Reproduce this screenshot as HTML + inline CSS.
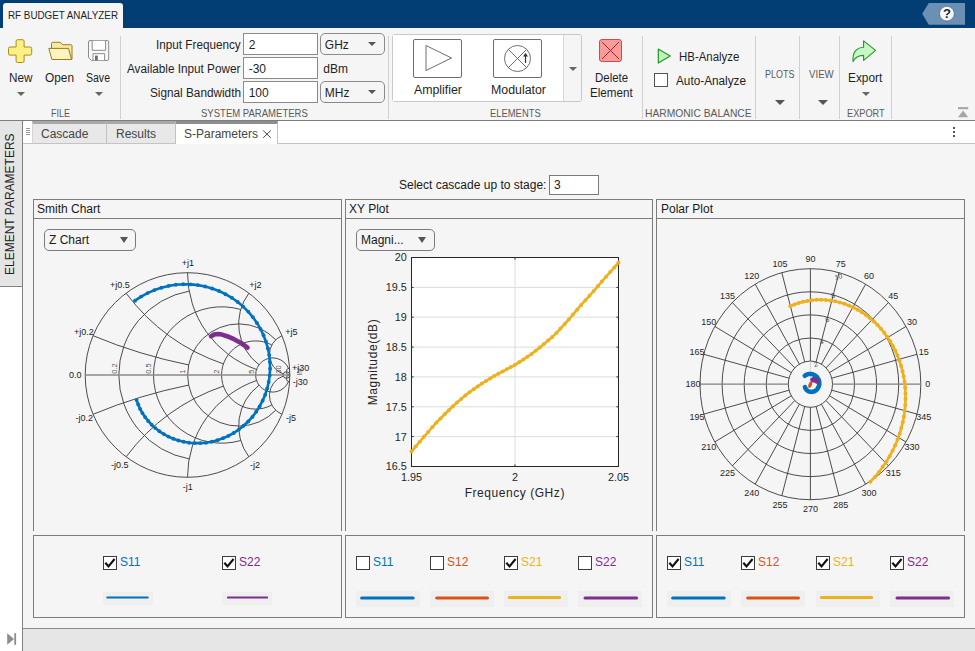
<!DOCTYPE html>
<html><head><meta charset="utf-8"><title>RF Budget Analyzer</title>
<style>
html,body{margin:0;padding:0;}
body{width:975px;height:651px;overflow:hidden;position:relative;background:#f5f5f5;font-family:"Liberation Sans",sans-serif;color:#222;}
.abs{position:absolute;}
.t{position:absolute;white-space:nowrap;line-height:1;}
.ui{font-size:12px;color:#1f1f1f;transform-origin:0 50%;}
.sec{font-size:10.8px;color:#5a5a5a;transform-origin:0 50%;}
#titlebar{left:0;top:0;width:975px;height:27.5px;background:#023e73;}
#apptab{left:3px;top:3px;width:120px;height:26px;background:#f5f5f5;border-radius:3px 3px 0 0;}
#toolstrip{left:0;top:28px;width:975px;height:92px;background:#f5f5f5;}
#tsline{left:0;top:120px;width:975px;height:1px;background:#7d7d7d;}
.vsep{position:absolute;width:1px;background:#d0d0d0;top:36px;height:83px;}
.inp{position:absolute;background:#fff;border:1px solid #8a8a8a;box-sizing:border-box;height:22px;}
.dd{position:absolute;background:#f5f5f5;border:1px solid #8a8a8a;border-radius:4px;box-sizing:border-box;height:21px;}
.tri{position:absolute;width:0;height:0;border-left:4px solid transparent;border-right:4px solid transparent;border-top:4px solid #555;}

.pl{font-size:12px;color:#1a1a1a;}
.panel{position:absolute;box-sizing:border-box;border:1px solid #7c7c7c;background:#f5f5f5;}
.cb{position:absolute;width:14px;height:14px;box-sizing:border-box;border:1px solid #3c3c3c;background:#fff;}
.sw{position:absolute;background:#efefef;height:13px;}
.ln{position:absolute;height:2px;}
</style></head><body>
<!-- TITLE BAR -->
<div class="abs" id="titlebar"></div>
<div class="abs" id="apptab"></div>
<div class="t ui" style="left:8.0px;top:10.0px;font-size:10.6px;transform:scaleX(0.928);">RF BUDGET ANALYZER</div>
<div class="abs" id="toolstrip"></div>
<div class="abs" id="tsline"></div>
<!-- help -->
<svg class="abs" style="left:920px;top:0px" width="50" height="28" viewBox="0 0 50 28"><defs><radialGradient id="hg" cx="0.4" cy="0.3" r="0.8"><stop offset="0" stop-color="#fff"/><stop offset="0.7" stop-color="#f2f4f6"/><stop offset="1" stop-color="#cfd6dd"/></radialGradient></defs><path d="M2.2 13.8 L8.8 2.9 H45 V24.8 H8.8 Z" fill="#6b90b4"/><circle cx="26.9" cy="13.7" r="7.4" fill="url(#hg)" stroke="#35597e" stroke-width="0.6"/><text x="26.9" y="18.3" font-size="13" font-weight="bold" text-anchor="middle" fill="#1c2733" font-family="Liberation Sans, sans-serif">?</text></svg>

<!-- FILE section -->
<svg class="abs" style="left:6px;top:37px" width="110" height="28" viewBox="0 0 110 28">
 <path d="M11.6 2.7 H16.6 Q18.1 2.7 18.1 4.2 V10 H24.2 Q25.7 10 25.7 11.5 V16.6 Q25.7 18.1 24.2 18.1 H18.1 V24 Q18.1 25.5 16.6 25.5 H11.6 Q10.1 25.5 10.1 24 V18.1 H4 Q2.5 18.1 2.5 16.6 V11.5 Q2.5 10 4 10 H10.1 V4.2 Q10.1 2.7 11.6 2.7 Z" fill="#ffef86" stroke="#a98d12" stroke-width="1"/>
 <path d="M45.5 12 V6.6 Q45.5 5.3 46.8 5.3 H54.4 L56.4 7.7 H64.8 Q66 7.7 66 8.9 V22.4 H63" fill="#fbe9a2" stroke="#9a7c20" stroke-width="1" stroke-linejoin="round"/>
 <path d="M42.8 11.4 H62.5 L65.5 22.5 H45.9 Z" fill="#fdf3bf" stroke="#9a7c20" stroke-width="1" stroke-linejoin="round"/>
 <path d="M84 3.5 H101.2 Q102.7 3.5 102.7 5 V22 Q102.7 23.5 101.2 23.5 H85.6 L82.5 20.6 V5 Q82.5 3.5 84 3.5 Z" fill="#f7f7f7" stroke="#8c8c8c" stroke-width="1"/>
 <path d="M86.2 3.8 V13.3 H99.6 V3.8" fill="#fff" stroke="#8c8c8c" stroke-width="1"/>
 <path d="M87 23.2 V16.7 H98.6 V23.2" fill="#fff" stroke="#8c8c8c" stroke-width="1"/>
 <rect x="89" y="18.6" width="2.8" height="4.8" fill="#6e6e6e"/>
</svg>
<div class="t ui" style="left:8.5px;top:71.8px;font-size:12px;transform:scaleX(0.979);">New</div>
<div class="t ui" style="left:45.0px;top:71.8px;font-size:12px;transform:scaleX(0.988);">Open</div>
<div class="t ui" style="left:86.0px;top:71.8px;font-size:12px;transform:scaleX(0.877);">Save</div>
<div class="tri" style="left:17.2px;top:92px;border-top-color:#666;"></div>
<div class="tri" style="left:95.4px;top:92px;border-top-color:#666;"></div>
<div class="t sec" style="left:50.5px;top:107.7px;font-size:10.8px;transform:scaleX(0.833);">FILE</div>
<div class="vsep" style="left:120px;"></div>

<!-- SYSTEM PARAMETERS -->
<div class="t ui" style="left:155.9px;top:39px;font-size:12px;transform:scaleX(0.977);">Input Frequency</div>
<div class="t ui" style="left:127.2px;top:63.4px;font-size:12px;transform:scaleX(0.979);">Available Input Power</div>
<div class="t ui" style="left:149.6px;top:87px;font-size:12px;transform:scaleX(0.981);">Signal Bandwidth</div>
<div class="inp" style="left:243px;top:33px;width:75px;"></div>
<div class="inp" style="left:243px;top:57px;width:75px;"></div>
<div class="inp" style="left:243px;top:81px;width:75px;"></div>
<div class="t ui" style="left:248.7px;top:38.8px;">2</div>
<div class="t ui" style="left:248.7px;top:62.9px;">-30</div>
<div class="t ui" style="left:248.7px;top:86.7px;">100</div>
<div class="dd" style="left:320px;top:33px;width:65px;height:22px;border-radius:5px;"></div>
<div class="dd" style="left:320px;top:81px;width:65px;height:22px;border-radius:5px;"></div>
<div class="t ui" style="left:324.8px;top:38.8px;">GHz</div>
<div class="t ui" style="left:323.3px;top:62.9px;">dBm</div>
<div class="t ui" style="left:324.8px;top:86.7px;">MHz</div>
<div class="tri" style="left:368px;top:42px;"></div>
<div class="tri" style="left:368px;top:90px;"></div>
<div class="t sec" style="left:201.3px;top:107.7px;font-size:10.8px;transform:scaleX(0.883);">SYSTEM PARAMETERS</div>
<div class="vsep" style="left:388px;"></div>

<!-- ELEMENTS -->
<div class="abs" style="left:392px;top:34px;width:190px;height:68px;box-sizing:border-box;border:1px solid #c9c9c9;border-radius:3px;background:#f5f5f5;"></div>
<div class="abs" style="left:393px;top:35px;width:170px;height:66px;background:#fff;border-right:1px solid #d6d6d6;"></div>
<svg class="abs" style="left:410px;top:36px" width="136" height="44" viewBox="0 0 136 44">
 <rect x="3.5" y="3.5" width="48" height="38" rx="1.5" fill="#fff" stroke="#6e6e6e" stroke-width="1"/>
 <path d="M16 9.5 L41.5 22 L16 34.5 Z" fill="#fff" stroke="#6e6e6e" stroke-width="1"/>
 <rect x="83.5" y="3.5" width="48" height="38" rx="1.5" fill="#fff" stroke="#6e6e6e" stroke-width="1"/>
 <circle cx="107.5" cy="22.5" r="13" fill="#fff" stroke="#6e6e6e" stroke-width="1"/>
 <path d="M98.3 13.3 L116.7 31.7 M116.7 13.3 L98.3 31.7" stroke="#6e6e6e" stroke-width="1"/>
 <path d="M115.5 18 V27" stroke="#333" stroke-width="1.2"/><path d="M113 20.5 L115.5 17 L118 20.5 Z" fill="#333"/>
</svg>
<div class="t ui" style="left:414.3px;top:83.6px;font-size:12px;transform:scaleX(1.028);">Amplifier</div>
<div class="t ui" style="left:490.9px;top:83.6px;font-size:12px;transform:scaleX(1.029);">Modulator</div>
<div class="tri" style="left:569px;top:67px;border-top-color:#666;"></div>
<svg class="abs" style="left:597px;top:37px" width="28" height="28" viewBox="0 0 28 28">
 <rect x="2.5" y="2.5" width="22" height="22" rx="2.5" fill="#fc9a9a" stroke="#cf4a4a" stroke-width="1"/>
 <path d="M5 5 L22 22 M22 5 L5 22" stroke="#8f2b2b" stroke-width="1"/>
</svg>
<div class="t ui" style="left:595.1px;top:71.6px;font-size:12px;transform:scaleX(0.954);">Delete</div>
<div class="t ui" style="left:590.3px;top:87.4px;font-size:12px;transform:scaleX(0.970);">Element</div>
<div class="t sec" style="left:489.5px;top:107.7px;font-size:10.8px;transform:scaleX(0.871);">ELEMENTS</div>
<div class="vsep" style="left:642px;"></div>

<!-- HARMONIC BALANCE -->
<svg class="abs" style="left:656px;top:46px" width="18" height="20" viewBox="0 0 18 20"><path d="M2.3 3.1 L14.2 10 L2.3 17 Z" fill="#c2f1bd" stroke="#1f9a22" stroke-width="1.2" stroke-linejoin="round"/></svg>
<div class="t ui" style="left:678.6px;top:50.8px;font-size:12px;transform:scaleX(0.953);">HB-Analyze</div>
<div class="abs" style="left:654px;top:73px;width:14px;height:14px;box-sizing:border-box;border:1px solid #555;background:#fff;"></div>
<div class="t ui" style="left:676.0px;top:75px;font-size:12px;transform:scaleX(0.981);">Auto-Analyze</div>
<div class="t sec" style="left:645.4px;top:107.7px;font-size:10.8px;transform:scaleX(0.950);">HARMONIC BALANCE</div>
<div class="vsep" style="left:755px;"></div>
<div class="t sec" style="left:765.0px;top:68.9px;font-size:10.8px;transform:scaleX(0.830);">PLOTS</div>
<div class="tri" style="left:775px;top:100px;border-width:5px 5.5px 0 5.5px;"></div>
<div class="vsep" style="left:799px;"></div>
<div class="t sec" style="left:809.0px;top:68.9px;font-size:10.8px;transform:scaleX(0.895);">VIEW</div>
<div class="tri" style="left:818px;top:100px;border-width:5px 5.5px 0 5.5px;"></div>
<div class="vsep" style="left:839px;"></div>
<svg class="abs" style="left:851px;top:38px" width="28" height="26" viewBox="0 0 28 26"><path d="M2 23.6 C1.4 14.5 5 9.6 12.6 9.2 V2.9 L24.6 12.4 L12.6 22.4 V17.4 C7.2 17.4 4.2 19 2 23.6 Z" fill="#c9f6c6" stroke="#1f9a22" stroke-width="1.1" stroke-linejoin="round"/></svg>
<div class="t ui" style="left:847.8px;top:71.8px;font-size:12px;transform:scaleX(0.986);">Export</div>
<div class="tri" style="left:862.2px;top:92px;border-top-color:#666;"></div>
<div class="t sec" style="left:846.8px;top:107.7px;font-size:10.8px;transform:scaleX(0.853);">EXPORT</div>
<div class="vsep" style="left:891px;"></div>
<svg class="abs" style="left:956px;top:105px" width="14" height="14" viewBox="0 0 14 14"><rect x="2" y="2.1" width="10.2" height="2.1" fill="#a6a6a6"/><path d="M2 12.3 L7.1 5.6 L12.2 12.3 Z" fill="#a6a6a6"/></svg>


<!-- MAIN -->
<div class="abs" style="left:0;top:121px;width:22px;height:507px;background:#fff;"></div>
<div class="abs" style="left:0;top:121px;width:22px;height:165px;background:#e5e5e5;border-bottom:1px solid #828282;"></div>
<div class="abs" style="left:22px;top:121px;width:1px;height:530px;background:#808080;"></div>
<div class="t" style="left:4px;top:275px;font-size:12px;color:#222;transform-origin:0 0;transform:rotate(-90deg);">ELEMENT PARAMETERS</div>
<!-- tab strip -->
<div class="abs" style="left:23px;top:121px;width:952px;height:22px;background:#fff;border-bottom:1px solid #c4c4c4;"></div>
<div class="abs" style="left:26px;top:128px;width:4px;height:1px;background:#969696;box-shadow:0 2px 0 #969696,0 4px 0 #969696,0 6px 0 #969696;"></div>
<div class="abs" style="left:32px;top:121px;width:75px;height:23px;box-sizing:border-box;background:#e8e8e8;border-top:3px solid #a8a8a8;border-left:1px solid #d4d4d4;border-right:1px solid #c2c2c2;border-bottom:1px solid #c4c4c4;"></div>
<div class="abs" style="left:107px;top:121px;width:69px;height:23px;box-sizing:border-box;background:#e8e8e8;border-top:3px solid #a8a8a8;border-right:1px solid #c2c2c2;border-bottom:1px solid #c4c4c4;"></div>
<div class="abs" style="left:176px;top:121px;width:102px;height:23px;box-sizing:border-box;background:#fff;border-top:3px solid #8e8e8e;border-right:1px solid #c2c2c2;"></div>
<div class="t pl" style="left:41px;top:128px;color:#444;">Cascade</div>
<div class="t pl" style="left:116px;top:128px;color:#444;">Results</div>
<div class="t pl" style="left:184px;top:128px;color:#444;">S-Parameters</div>
<svg class="abs" style="left:262px;top:129px" width="10" height="10" viewBox="0 0 10 10"><path d="M1.2 1.5 L8.8 8.8 M8.8 1.5 L1.2 8.8" stroke="#444" stroke-width="1"/></svg>
<div class="abs" style="left:953px;top:127px;width:2px;height:2px;background:#555;box-shadow:0 4px 0 #555,0 8px 0 #555;"></div>
<!-- status bar -->
<div class="abs" style="left:23px;top:628px;width:952px;height:23px;background:#e6e6e6;border-top:1px solid #8a8a8a;box-sizing:border-box;"></div>
<div class="abs" style="left:0;top:628px;width:22px;height:23px;background:#fff;"></div>
<svg class="abs" style="left:6px;top:632px" width="12" height="14" viewBox="0 0 12 14"><path d="M1.2 1.2 L8 7 L1.2 12.8 Z" fill="#8c8c8c"/><rect x="8.3" y="1.2" width="1.8" height="11.6" fill="#8c8c8c"/></svg>
<!-- stage -->
<div class="t pl" style="left:399px;top:179px;">Select cascade up to stage:</div>
<div class="inp" style="left:549px;top:175px;width:50px;height:20px;border-color:#7a7a7a;"></div>
<div class="t pl" style="left:554px;top:179px;">3</div>
<!-- panels -->
<div class="panel" style="left:33px;top:199px;width:309px;height:20px;"></div>
<div class="panel" style="left:33px;top:218px;width:309px;height:313px;border-bottom:none;"></div>
<div class="panel" style="left:33px;top:535px;width:309px;height:83px;"></div>
<div class="panel" style="left:345px;top:199px;width:308px;height:20px;"></div>
<div class="panel" style="left:345px;top:218px;width:308px;height:313px;border-bottom:none;"></div>
<div class="panel" style="left:345px;top:535px;width:308px;height:83px;"></div>
<div class="panel" style="left:656px;top:199px;width:309px;height:20px;"></div>
<div class="panel" style="left:656px;top:218px;width:309px;height:313px;border-bottom:none;"></div>
<div class="panel" style="left:656px;top:535px;width:309px;height:83px;"></div>
<div class="t pl" style="left:37px;top:203px;">Smith Chart</div>
<div class="t pl" style="left:349px;top:203px;">XY Plot</div>
<div class="t pl" style="left:661px;top:203px;">Polar Plot</div>
<!-- dropdowns -->
<div class="dd" style="left:44px;top:229px;width:92px;height:22px;border-color:#7a7a7a;border-radius:5px;"></div>
<div class="t pl" style="left:49px;top:234px;">Z Chart</div>
<div class="tri" style="left:120px;top:237px;border-width:6px 4.5px 0 4.5px;border-top-color:#555;"></div>
<div class="dd" style="left:356px;top:229px;width:79px;height:22px;border-color:#7a7a7a;border-radius:5px;"></div>
<div class="t pl" style="left:361px;top:234px;">Magni...</div>
<div class="tri" style="left:418px;top:237px;border-width:6px 4.5px 0 4.5px;border-top-color:#555;"></div>
<!-- LEGENDS -->
<div class="cb" style="left:103px;top:556px;"></div>
<svg class="abs" style="left:103px;top:556px" width="14" height="14" viewBox="0 0 14 14"><path d="M2.3 6.8 L5.5 10.3 L11.6 3" fill="none" stroke="#111" stroke-width="2.1"/></svg>
<div class="t pl" style="left:120px;top:556px;color:#0072bd;">S11</div>
<div class="sw" style="left:103px;top:592px;width:50px;height:13px;"></div>
<div class="cb" style="left:222px;top:556px;"></div>
<svg class="abs" style="left:222px;top:556px" width="14" height="14" viewBox="0 0 14 14"><path d="M2.3 6.8 L5.5 10.3 L11.6 3" fill="none" stroke="#111" stroke-width="2.1"/></svg>
<div class="t pl" style="left:239px;top:556px;color:#7e2f8e;">S22</div>
<div class="sw" style="left:222px;top:592px;width:50px;height:13px;"></div>
<div class="cb" style="left:356px;top:556px;"></div>
<div class="t pl" style="left:373px;top:556px;color:#0072bd;">S11</div>
<div class="sw" style="left:356px;top:591px;width:64px;height:16px;"></div>
<div class="cb" style="left:430px;top:556px;"></div>
<div class="t pl" style="left:447px;top:556px;color:#d95319;">S12</div>
<div class="sw" style="left:430px;top:591px;width:64px;height:16px;"></div>
<div class="cb" style="left:504px;top:556px;"></div>
<svg class="abs" style="left:504px;top:556px" width="14" height="14" viewBox="0 0 14 14"><path d="M2.3 6.8 L5.5 10.3 L11.6 3" fill="none" stroke="#111" stroke-width="2.1"/></svg>
<div class="t pl" style="left:521px;top:556px;color:#edb120;">S21</div>
<div class="sw" style="left:504px;top:591px;width:64px;height:16px;"></div>
<div class="cb" style="left:578px;top:556px;"></div>
<div class="t pl" style="left:595px;top:556px;color:#7e2f8e;">S22</div>
<div class="sw" style="left:578px;top:591px;width:64px;height:16px;"></div>
<div class="cb" style="left:667px;top:556px;"></div>
<svg class="abs" style="left:667px;top:556px" width="14" height="14" viewBox="0 0 14 14"><path d="M2.3 6.8 L5.5 10.3 L11.6 3" fill="none" stroke="#111" stroke-width="2.1"/></svg>
<div class="t pl" style="left:684px;top:556px;color:#0072bd;">S11</div>
<div class="sw" style="left:667px;top:591px;width:64px;height:16px;"></div>
<div class="cb" style="left:741px;top:556px;"></div>
<svg class="abs" style="left:741px;top:556px" width="14" height="14" viewBox="0 0 14 14"><path d="M2.3 6.8 L5.5 10.3 L11.6 3" fill="none" stroke="#111" stroke-width="2.1"/></svg>
<div class="t pl" style="left:758px;top:556px;color:#d95319;">S12</div>
<div class="sw" style="left:741px;top:591px;width:64px;height:16px;"></div>
<div class="cb" style="left:816px;top:556px;"></div>
<svg class="abs" style="left:816px;top:556px" width="14" height="14" viewBox="0 0 14 14"><path d="M2.3 6.8 L5.5 10.3 L11.6 3" fill="none" stroke="#111" stroke-width="2.1"/></svg>
<div class="t pl" style="left:833px;top:556px;color:#edb120;">S21</div>
<div class="sw" style="left:816px;top:591px;width:64px;height:16px;"></div>
<div class="cb" style="left:890px;top:556px;"></div>
<svg class="abs" style="left:890px;top:556px" width="14" height="14" viewBox="0 0 14 14"><path d="M2.3 6.8 L5.5 10.3 L11.6 3" fill="none" stroke="#111" stroke-width="2.1"/></svg>
<div class="t pl" style="left:907px;top:556px;color:#7e2f8e;">S22</div>
<div class="sw" style="left:890px;top:591px;width:64px;height:16px;"></div>
<!-- CHARTS-BEGIN -->
<svg class="abs" style="left:0;top:0" width="975" height="651" viewBox="0 0 975 651" font-family="Liberation Sans, sans-serif">
<g fill="none" stroke="#424242" stroke-width="0.95">
<circle cx="187.5" cy="375.0" r="102.3"/>
<circle cx="286.5" cy="375.0" r="3.3"/>
<path d="M288.5 368.4A17.1 17.1 0 1 0 288.5 381.6M271.7 344.9A34.1 34.1 0 1 0 271.7 405.1M275.7 339.7A51.1 51.1 0 1 0 275.7 410.3M240.7 309.5A68.2 68.2 0 1 0 240.7 440.5M189.2 291.1A85.2 85.2 0 0 0 189.2 458.9M289.6 368.2A3.4 3.4 0 0 0 289.8 375M289.6 381.8A3.4 3.4 0 0 1 289.8 375M281.9 335.7A20.5 20.5 0 0 0 283.4 374M281.9 414.3A20.5 20.5 0 0 1 283.4 376M248.9 293.2A51.1 51.1 0 0 0 259.1 364.8M248.9 456.8A51.1 51.1 0 0 1 259.1 385.2M187.5 272.7A102.3 102.3 0 0 0 256.6 369.5M187.5 477.3A102.3 102.3 0 0 1 256.6 380.5M126.1 293.2A204.6 204.6 0 0 0 223.4 363.9M126.1 456.8A204.6 204.6 0 0 1 223.4 386.1M93.1 335.7A511.5 511.5 0 0 0 188.5 364.9M93.1 414.3A511.5 511.5 0 0 1 188.5 385.1"/>
</g>
<path d="M85.2 375.0H289.8" stroke="#8a8a8a" stroke-width="1.3"/>
<g font-size="9" fill="#222">
<text x="187.8" y="266.3" text-anchor="middle">+j1</text>
<text x="110" y="288.2" text-anchor="start">+j0.5</text>
<text x="74" y="335.0" text-anchor="start">+j0.2</text>
<text x="69" y="378.3" text-anchor="start">0.0</text>
<text x="75.5" y="420.8" text-anchor="start">-j0.2</text>
<text x="111" y="467.7" text-anchor="start">-j0.5</text>
<text x="187.8" y="489.6" text-anchor="middle">-j1</text>
<text x="249.3" y="288.0" text-anchor="start">+j2</text>
<text x="285.2" y="335.0" text-anchor="start">+j5</text>
<text x="292" y="370.8" text-anchor="start">+j30</text>
<text x="292.7" y="384.6" text-anchor="start">-j30</text>
<text x="286" y="421" text-anchor="start">-j5</text>
<text x="250" y="468.3" text-anchor="start">-j2</text>
</g>
<g font-size="7.5" fill="#555">
<text transform="translate(117.1 373.7) rotate(-90)">0.2</text>
<text transform="translate(151.2 373.7) rotate(-90)">0.5</text>
<text transform="translate(185.3 373.7) rotate(-90)">1</text>
<text transform="translate(219.4 373.7) rotate(-90)">2</text>
<text transform="translate(253.5 373.7) rotate(-90)">5</text>
<text transform="translate(280.5 373.7) rotate(-90)">30</text>
<text transform="translate(302 375.5) rotate(-90)" font-size="6.5">Inf</text>
</g>
<path d="M135 300.7L141.1 296.6L147.6 293.1L154.4 290.1L161.4 287.7L168.5 285.9L175.8 284.8L183.2 284.3L190.6 284.4L197.9 285.1L205.1 286.5L212.1 288.5L219 291L225.5 294.2L231.8 297.8L237.7 302L243.2 306.6L248.2 311.6L252.8 317.1L256.9 322.9L260.5 328.9L263.5 335.2L266 341.8L267.9 348.4L269.2 355.1L269.9 361.9L270.1 368.7L269.7 375.4L268.7 382L267.2 388.5L265.2 394.7L262.6 400.7L259.6 406.4L256.2 411.8L252.4 416.9L248.2 421.5L243.6 425.8L238.8 429.6L233.7 433L228.4 435.9L223 438.3L217.4 440.2L211.7 441.7L206 442.7L200.3 443.1L194.7 443.1L189.1 442.7L183.7 441.8L178.4 440.5L173.3 438.7L168.4 436.6L163.8 434.1L159.4 431.3L155.3 428.1L151.6 424.7L148.2 421L145.1 417.1L142.4 413.1L140.1 408.9L138.2 404.5L136.6 400.1" fill="none" stroke="#0072bd" stroke-width="2.6" stroke-linecap="round" stroke-linejoin="round"/>
<g fill="#0072bd"><circle cx="135" cy="300.7" r="1.95"/><circle cx="141.1" cy="296.6" r="1.95"/><circle cx="147.6" cy="293.1" r="1.95"/><circle cx="154.4" cy="290.1" r="1.95"/><circle cx="161.4" cy="287.7" r="1.95"/><circle cx="168.5" cy="285.9" r="1.95"/><circle cx="175.8" cy="284.8" r="1.95"/><circle cx="183.2" cy="284.3" r="1.95"/><circle cx="190.6" cy="284.4" r="1.95"/><circle cx="197.9" cy="285.1" r="1.95"/><circle cx="205.1" cy="286.5" r="1.95"/><circle cx="212.1" cy="288.5" r="1.95"/><circle cx="219" cy="291" r="1.95"/><circle cx="225.5" cy="294.2" r="1.95"/><circle cx="231.8" cy="297.8" r="1.95"/><circle cx="237.7" cy="302" r="1.95"/><circle cx="243.2" cy="306.6" r="1.95"/><circle cx="248.2" cy="311.6" r="1.95"/><circle cx="252.8" cy="317.1" r="1.95"/><circle cx="256.9" cy="322.9" r="1.95"/><circle cx="260.5" cy="328.9" r="1.95"/><circle cx="263.5" cy="335.2" r="1.95"/><circle cx="266" cy="341.8" r="1.95"/><circle cx="267.9" cy="348.4" r="1.95"/><circle cx="269.2" cy="355.1" r="1.95"/><circle cx="269.9" cy="361.9" r="1.95"/><circle cx="270.1" cy="368.7" r="1.95"/><circle cx="269.7" cy="375.4" r="1.95"/><circle cx="268.7" cy="382" r="1.95"/><circle cx="267.2" cy="388.5" r="1.95"/><circle cx="265.2" cy="394.7" r="1.95"/><circle cx="262.6" cy="400.7" r="1.95"/><circle cx="259.6" cy="406.4" r="1.95"/><circle cx="256.2" cy="411.8" r="1.95"/><circle cx="252.4" cy="416.9" r="1.95"/><circle cx="248.2" cy="421.5" r="1.95"/><circle cx="243.6" cy="425.8" r="1.95"/><circle cx="238.8" cy="429.6" r="1.95"/><circle cx="233.7" cy="433" r="1.95"/><circle cx="228.4" cy="435.9" r="1.95"/><circle cx="223" cy="438.3" r="1.95"/><circle cx="217.4" cy="440.2" r="1.95"/><circle cx="211.7" cy="441.7" r="1.95"/><circle cx="206" cy="442.7" r="1.95"/><circle cx="200.3" cy="443.1" r="1.95"/><circle cx="194.7" cy="443.1" r="1.95"/><circle cx="189.1" cy="442.7" r="1.95"/><circle cx="183.7" cy="441.8" r="1.95"/><circle cx="178.4" cy="440.5" r="1.95"/><circle cx="173.3" cy="438.7" r="1.95"/><circle cx="168.4" cy="436.6" r="1.95"/><circle cx="163.8" cy="434.1" r="1.95"/><circle cx="159.4" cy="431.3" r="1.95"/><circle cx="155.3" cy="428.1" r="1.95"/><circle cx="151.6" cy="424.7" r="1.95"/><circle cx="148.2" cy="421" r="1.95"/><circle cx="145.1" cy="417.1" r="1.95"/><circle cx="142.4" cy="413.1" r="1.95"/><circle cx="140.1" cy="408.9" r="1.95"/><circle cx="138.2" cy="404.5" r="1.95"/><circle cx="136.6" cy="400.1" r="1.95"/></g>
<path d="M211 336.2L214 334.6L218 334L222 334.6L227 336.2L234 339.2L241 343L247.5 347.6" fill="none" stroke="#7e2f8e" stroke-width="4.6" stroke-linecap="round" stroke-linejoin="round"/>
<rect x="411.5" y="257.5" width="207.0" height="209.0" fill="#fff"/>
<path d="M411.5 287.4H618.5M411.5 317.2H618.5M411.5 347.1H618.5M411.5 376.9H618.5M411.5 406.8H618.5M411.5 436.6H618.5M515 257.5V466.5" stroke="#dcdcdc" stroke-width="1" fill="none"/>
<path d="M411.5 257.5h2.2M618.5 257.5h-2.2M411.5 287.4h2.2M618.5 287.4h-2.2M411.5 317.2h2.2M618.5 317.2h-2.2M411.5 347.1h2.2M618.5 347.1h-2.2M411.5 376.9h2.2M618.5 376.9h-2.2M411.5 406.8h2.2M618.5 406.8h-2.2M411.5 436.6h2.2M618.5 436.6h-2.2M411.5 466.5h2.2M618.5 466.5h-2.2M411.5 466.5v-2.2M411.5 257.5v2.2M515 466.5v-2.2M515 257.5v2.2M618.5 466.5v-2.2M618.5 257.5v2.2" stroke="#262626" stroke-width="0.9" fill="none"/>
<rect x="411.5" y="257.5" width="207.0" height="209.0" fill="none" stroke="#262626" stroke-width="1"/>
<g font-size="10.8" fill="#262626">
<text x="406.8" y="261.4" text-anchor="end">20</text>
<text x="406.8" y="291.3" text-anchor="end">19.5</text>
<text x="406.8" y="321.1" text-anchor="end">19</text>
<text x="406.8" y="351" text-anchor="end">18.5</text>
<text x="406.8" y="380.8" text-anchor="end">18</text>
<text x="406.8" y="410.7" text-anchor="end">17.5</text>
<text x="406.8" y="440.5" text-anchor="end">17</text>
<text x="406.8" y="470.4" text-anchor="end">16.5</text>
<text x="411.5" y="480.8" text-anchor="middle">1.95</text>
<text x="515" y="480.8" text-anchor="middle">2</text>
<text x="618.5" y="480.8" text-anchor="middle">2.05</text>
</g>
<g font-size="12" fill="#262626">
<text x="514.8" y="497" text-anchor="middle" letter-spacing="0.55">Frequency (GHz)</text>
<text transform="translate(377 362) rotate(-90)" text-anchor="middle" letter-spacing="0.6">Magnitude(dB)</text>
</g>
<path d="M411.5 451.6L415.6 446.6L419.8 441.7L423.9 436.8L428.1 432L432.2 427.3L436.3 422.7L440.5 418.5L444.6 414.3L448.8 410.2L452.9 406.2L457 402.5L461.2 398.9L465.3 395.4L469.5 392.2L473.6 389.3L477.7 386.4L481.9 383.6L486 381L490.2 378.4L494.3 375.9L498.4 373.7L502.6 371.5L506.7 369.3L510.9 367.1L515 364.8L519.1 362.2L523.3 359.6L527.4 356.8L531.6 353.9L535.7 350.8L539.8 347.5L544 344.1L548.1 340.6L552.3 336.9L556.4 333.1L560.5 328.6L564.7 324L568.8 319.4L573 314.6L577.1 309.7L581.2 304.9L585.4 300.3L589.5 295.7L593.7 291.1L597.8 286.3L601.9 281.5L606.1 276.7L610.2 272.1L614.4 267.4L618.5 262.6" fill="none" stroke="#edb120" stroke-width="2.6" stroke-linejoin="round"/>
<g fill="#edb120"><circle cx="411.5" cy="451.6" r="2"/><circle cx="415.6" cy="446.6" r="2"/><circle cx="419.8" cy="441.7" r="2"/><circle cx="423.9" cy="436.8" r="2"/><circle cx="428.1" cy="432" r="2"/><circle cx="432.2" cy="427.3" r="2"/><circle cx="436.3" cy="422.7" r="2"/><circle cx="440.5" cy="418.5" r="2"/><circle cx="444.6" cy="414.3" r="2"/><circle cx="448.8" cy="410.2" r="2"/><circle cx="452.9" cy="406.2" r="2"/><circle cx="457" cy="402.5" r="2"/><circle cx="461.2" cy="398.9" r="2"/><circle cx="465.3" cy="395.4" r="2"/><circle cx="469.5" cy="392.2" r="2"/><circle cx="473.6" cy="389.3" r="2"/><circle cx="477.7" cy="386.4" r="2"/><circle cx="481.9" cy="383.6" r="2"/><circle cx="486" cy="381" r="2"/><circle cx="490.2" cy="378.4" r="2"/><circle cx="494.3" cy="375.9" r="2"/><circle cx="498.4" cy="373.7" r="2"/><circle cx="502.6" cy="371.5" r="2"/><circle cx="506.7" cy="369.3" r="2"/><circle cx="510.9" cy="367.1" r="2"/><circle cx="515" cy="364.8" r="2"/><circle cx="519.1" cy="362.2" r="2"/><circle cx="523.3" cy="359.6" r="2"/><circle cx="527.4" cy="356.8" r="2"/><circle cx="531.6" cy="353.9" r="2"/><circle cx="535.7" cy="350.8" r="2"/><circle cx="539.8" cy="347.5" r="2"/><circle cx="544" cy="344.1" r="2"/><circle cx="548.1" cy="340.6" r="2"/><circle cx="552.3" cy="336.9" r="2"/><circle cx="556.4" cy="333.1" r="2"/><circle cx="560.5" cy="328.6" r="2"/><circle cx="564.7" cy="324" r="2"/><circle cx="568.8" cy="319.4" r="2"/><circle cx="573" cy="314.6" r="2"/><circle cx="577.1" cy="309.7" r="2"/><circle cx="581.2" cy="304.9" r="2"/><circle cx="585.4" cy="300.3" r="2"/><circle cx="589.5" cy="295.7" r="2"/><circle cx="593.7" cy="291.1" r="2"/><circle cx="597.8" cy="286.3" r="2"/><circle cx="601.9" cy="281.5" r="2"/><circle cx="606.1" cy="276.7" r="2"/><circle cx="610.2" cy="272.1" r="2"/><circle cx="614.4" cy="267.4" r="2"/><circle cx="618.5" cy="262.6" r="2"/></g>
<g fill="none" stroke="#424242" stroke-width="0.95">
<ellipse cx="810.4" cy="384.2" rx="22.1" ry="23.1"/>
<ellipse cx="810.4" cy="384.2" rx="44.2" ry="46.2"/>
<ellipse cx="810.4" cy="384.2" rx="66.2" ry="69.3"/>
<ellipse cx="810.4" cy="384.2" rx="88.3" ry="92.4"/>
<ellipse cx="810.4" cy="384.2" rx="110.4" ry="115.5"/>
<path d="M831.7 378.2L917 354.3M829.5 372.6L906 326.4M826 367.9L888.5 302.5M821.4 364.2L865.6 284.2M816.1 361.9L839 272.6M810.4 361.1L810.4 268.7M804.7 361.9L781.8 272.6M799.4 364.2L755.2 284.2M794.8 367.9L732.3 302.5M791.3 372.6L714.8 326.4M789.1 378.2L703.8 354.3M789.1 390.2L703.8 414.1M791.3 395.8L714.8 441.9M794.8 400.5L732.3 465.9M799.4 404.2L755.2 484.2M804.7 406.5L781.8 495.8M810.4 407.3L810.4 499.7M816.1 406.5L839 495.8M821.4 404.2L865.6 484.2M826 400.5L888.5 465.9M829.5 395.8L906 442M831.7 390.2L917 414.1"/>
</g>
<path d="M700 384.2H788.3M832.5 384.2H920.8" stroke="#808080" stroke-width="1.3"/>
<path d="M810.4 361.1V384.2" stroke="#c4c4c4" stroke-width="0.7"/>
<g font-size="9" fill="#262626" text-anchor="middle">
<text x="927.7" y="387.4">0</text>
<text x="923.7" y="355">15</text>
<text x="912" y="324.9">30</text>
<text x="893.3" y="299">45</text>
<text x="869" y="279.1">60</text>
<text x="840.8" y="266.7">75</text>
<text x="810.4" y="262.4">90</text>
<text x="780" y="266.7">105</text>
<text x="751.8" y="279.1">120</text>
<text x="727.5" y="299">135</text>
<text x="708.8" y="324.9">150</text>
<text x="697.1" y="355">165</text>
<text x="693.1" y="387.4">180</text>
<text x="697.1" y="419.8">195</text>
<text x="708.8" y="449.9">210</text>
<text x="727.5" y="475.8">225</text>
<text x="751.7" y="495.7">240</text>
<text x="780" y="508.1">255</text>
<text x="810.4" y="512.4">270</text>
<text x="840.8" y="508.1">285</text>
<text x="869" y="495.7">300</text>
<text x="893.3" y="475.8">315</text>
<text x="912" y="449.9">330</text>
<text x="923.7" y="419.8">345</text>
</g>
<g font-size="7" fill="#4a4a4a" text-anchor="middle">
<text transform="translate(816.4 366.5) rotate(-15)">2</text>
<text transform="translate(822.1 344.2) rotate(-15)">4</text>
<text transform="translate(827.8 321.9) rotate(-15)">6</text>
<text transform="translate(833.6 297.8) rotate(-15)">8</text>
<text transform="translate(839.1 279) rotate(-15)">10</text>
</g>
<path d="M790.3 306.3L794.4 304.5L798.7 303L803 301.8L807.5 300.9L812 300.2L816.6 299.8L821.2 299.7L825.9 300L830.5 300.5L835.2 301.3L839.8 302.4L844.4 303.8L848.9 305.5L853.3 307.5L857.7 309.7L861.9 312.3L866 315.1L870 318.1L873.8 321.4L877.5 325L880.9 328.7L884.2 332.7L887.3 336.9L890.2 341.3L892.8 345.9L895.3 350.7L897.5 355.6L899.4 360.6L901.1 365.8L902.5 371.2L903.7 376.6L904.6 382.1L905.2 387.7L905.5 393.4L905.5 399.1L905.3 404.9L904.7 410.7L903.9 416.5L902.8 422.3L901.3 428.1L899.6 433.8L897.6 439.5L895.2 445.2L892.6 450.7L889.6 456.2L886.4 461.6L882.8 466.8L879 472L874.9 476.9L870.4 481.7" fill="none" stroke="#edb120" stroke-width="2.6" stroke-linejoin="round" stroke-linecap="round"/>
<g fill="#edb120"><circle cx="790.3" cy="306.3" r="2"/><circle cx="794.4" cy="304.5" r="2"/><circle cx="798.7" cy="303" r="2"/><circle cx="803" cy="301.8" r="2"/><circle cx="807.5" cy="300.9" r="2"/><circle cx="812" cy="300.2" r="2"/><circle cx="816.6" cy="299.8" r="2"/><circle cx="821.2" cy="299.7" r="2"/><circle cx="825.9" cy="300" r="2"/><circle cx="830.5" cy="300.5" r="2"/><circle cx="835.2" cy="301.3" r="2"/><circle cx="839.8" cy="302.4" r="2"/><circle cx="844.4" cy="303.8" r="2"/><circle cx="848.9" cy="305.5" r="2"/><circle cx="853.3" cy="307.5" r="2"/><circle cx="857.7" cy="309.7" r="2"/><circle cx="861.9" cy="312.3" r="2"/><circle cx="866" cy="315.1" r="2"/><circle cx="870" cy="318.1" r="2"/><circle cx="873.8" cy="321.4" r="2"/><circle cx="877.5" cy="325" r="2"/><circle cx="880.9" cy="328.7" r="2"/><circle cx="884.2" cy="332.7" r="2"/><circle cx="887.3" cy="336.9" r="2"/><circle cx="890.2" cy="341.3" r="2"/><circle cx="892.8" cy="345.9" r="2"/><circle cx="895.3" cy="350.7" r="2"/><circle cx="897.5" cy="355.6" r="2"/><circle cx="899.4" cy="360.6" r="2"/><circle cx="901.1" cy="365.8" r="2"/><circle cx="902.5" cy="371.2" r="2"/><circle cx="903.7" cy="376.6" r="2"/><circle cx="904.6" cy="382.1" r="2"/><circle cx="905.2" cy="387.7" r="2"/><circle cx="905.5" cy="393.4" r="2"/><circle cx="905.5" cy="399.1" r="2"/><circle cx="905.3" cy="404.9" r="2"/><circle cx="904.7" cy="410.7" r="2"/><circle cx="903.9" cy="416.5" r="2"/><circle cx="902.8" cy="422.3" r="2"/><circle cx="901.3" cy="428.1" r="2"/><circle cx="899.6" cy="433.8" r="2"/><circle cx="897.6" cy="439.5" r="2"/><circle cx="895.2" cy="445.2" r="2"/><circle cx="892.6" cy="450.7" r="2"/><circle cx="889.6" cy="456.2" r="2"/><circle cx="886.4" cy="461.6" r="2"/><circle cx="882.8" cy="466.8" r="2"/><circle cx="879" cy="472" r="2"/><circle cx="874.9" cy="476.9" r="2"/><circle cx="870.4" cy="481.7" r="2"/></g>
<path d="M804.7 375.8L805.4 375.3L806.1 374.9L806.8 374.6L807.6 374.3L808.4 374.1L809.1 374L809.9 374L810.7 374L811.5 374.1L812.3 374.2L813.1 374.4L813.8 374.7L814.5 375.1L815.2 375.5L815.8 376L816.4 376.5L817 377L817.4 377.7L817.9 378.3L818.3 379L818.6 379.7L818.9 380.4L819.1 381.2L819.2 382L819.3 382.7L819.3 383.5L819.3 384.2L819.2 385L819 385.7L818.8 386.4L818.5 387.1L818.2 387.7L817.8 388.4L817.4 388.9L816.9 389.5L816.5 389.9L815.9 390.4L815.4 390.7L814.8 391.1L814.2 391.3L813.6 391.6L813 391.7L812.4 391.8L811.8 391.9L811.2 391.9L810.6 391.8L810 391.7L809.4 391.6L808.9 391.4L808.3 391.2L807.8 390.9L807.4 390.6L806.9 390.2L806.5 389.8L806.2 389.4L805.8 389L805.5 388.5L805.3 388L805.1 387.5L804.9 387" fill="none" stroke="#0072bd" stroke-width="4.5" stroke-linejoin="round" stroke-linecap="round"/>
<path d="M812.9 379.8L813.3 379.6L813.7 379.6L814.1 379.6L814.7 379.8L815.4 380.2L816.2 380.6L816.9 381.1" fill="none" stroke="#7e2f8e" stroke-width="5.2" stroke-linejoin="round" stroke-linecap="round"/>
<ellipse cx="810.2" cy="384.8" rx="1.7" ry="3.4" transform="rotate(18 810.2 384.8)" fill="#d95319"/>
<path d="M361.6 598.0H413.2" stroke="#0072bd" stroke-width="3" stroke-linecap="round"/>
<path d="M436.7 598.0H487.5" stroke="#d95319" stroke-width="3" stroke-linecap="round"/>
<path d="M509.4 597.4H559.6" stroke="#edb120" stroke-width="3" stroke-linecap="round"/>
<path d="M585 598.0H636.6" stroke="#7e2f8e" stroke-width="3" stroke-linecap="round"/>
<path d="M672.6 598.0H724.2" stroke="#0072bd" stroke-width="3" stroke-linecap="round"/>
<path d="M747.7 598.0H798.5" stroke="#d95319" stroke-width="3" stroke-linecap="round"/>
<path d="M821.4 597.4H871.6" stroke="#edb120" stroke-width="3" stroke-linecap="round"/>
<path d="M897 598.0H948.6" stroke="#7e2f8e" stroke-width="3" stroke-linecap="round"/>
<path d="M107.2 597.5H147.8" stroke="#0072bd" stroke-width="1.9" stroke-linecap="round"/>
<path d="M227.8 597.5H267.2" stroke="#7e2f8e" stroke-width="1.9" stroke-linecap="round"/>
</svg>
<!-- CHARTS-END -->
</body></html>
